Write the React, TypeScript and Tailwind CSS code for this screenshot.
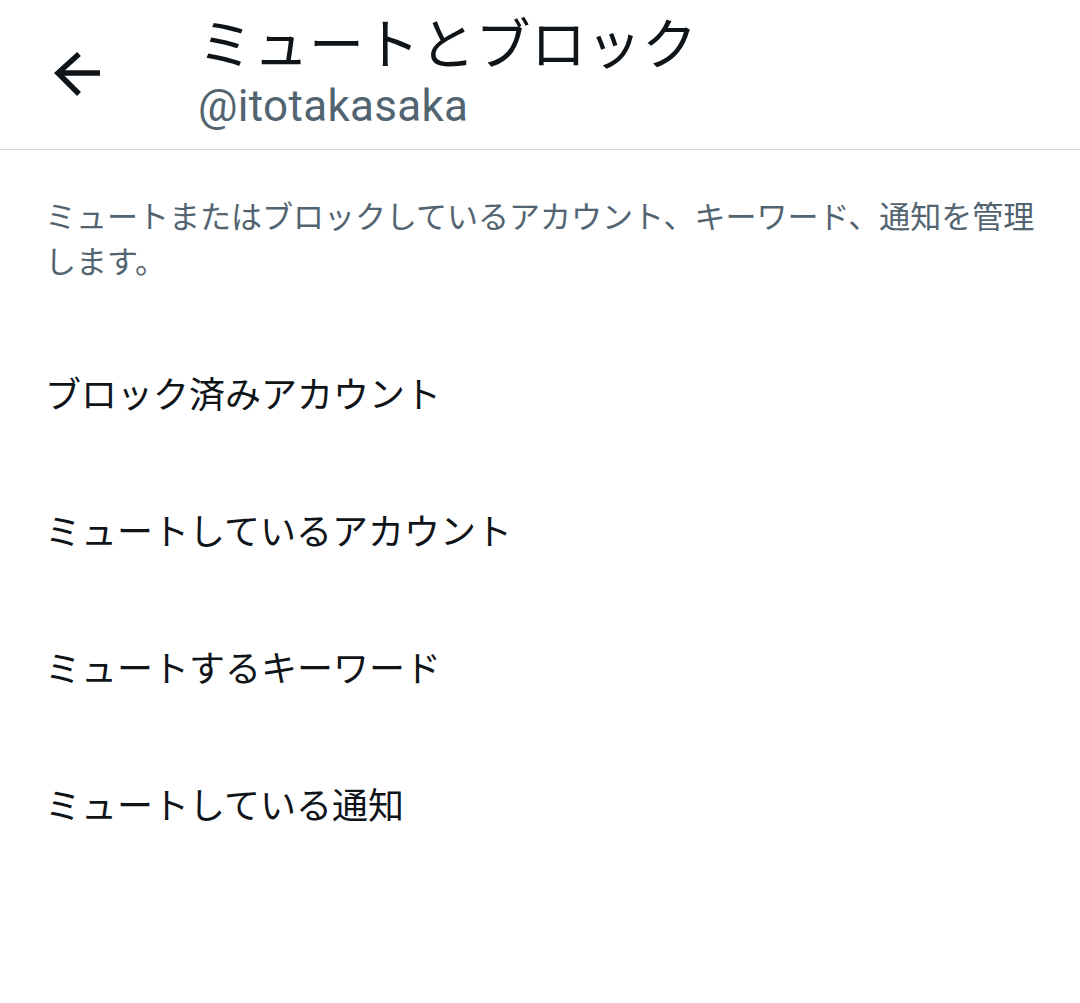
import React from "react";

const jp = { fontFamily: '"Noto Sans CJK JP", "Noto Sans", sans-serif' };

export default function App() {
  const items = [
    "ブロック済みアカウント",
    "ミュートしているアカウント",
    "ミュートするキーワード",
    "ミュートしている通知",
  ];
  return (
    <div className="w-[1080px] min-h-[1003px] bg-white" style={jp}>
      <header className="h-[150px] flex items-center border-b border-[#cfd9de]">
        <div className="pl-[54px] w-[198px] flex items-center">
          <svg width="48" height="46" viewBox="0 0 48 46" fill="none">
            <path d="M46 21H5" stroke="#0f1419" strokeWidth="5.5" />
            <path d="M25 2L4 21L25 42" stroke="#0f1419" strokeWidth="5.5" strokeLinejoin="miter" />
          </svg>
        </div>
        <div className="flex flex-col -mt-[4px]">
          <div className="text-[55px] leading-[62px] text-[#0f1419] tracking-[0.5px] -mt-[12px]">ミュートとブロック</div>
          <div
            className="text-[44px] leading-[46px] text-[#536471] mt-[12px] -mb-[4px] tracking-[0.3px]"
            style={{ fontFamily: 'Roboto, "Noto Sans", sans-serif' }}
          >
            @itotakasaka
          </div>
        </div>
      </header>
      <p className="pl-[45px] pr-[16px] pt-[42px] pb-[43px] text-[31px] leading-[45px] text-[#536471]">
        ミュートまたはブロックしているアカウント、キーワード、通知を管理します。
      </p>
      <ul>
        {items.map((t) => (
          <li key={t} className="h-[137px] flex items-center px-[45px] text-[36px] text-[#0f1419]">
            <span className="-mt-[4px]">{t}</span>
          </li>
        ))}
      </ul>
    </div>
  );
}
